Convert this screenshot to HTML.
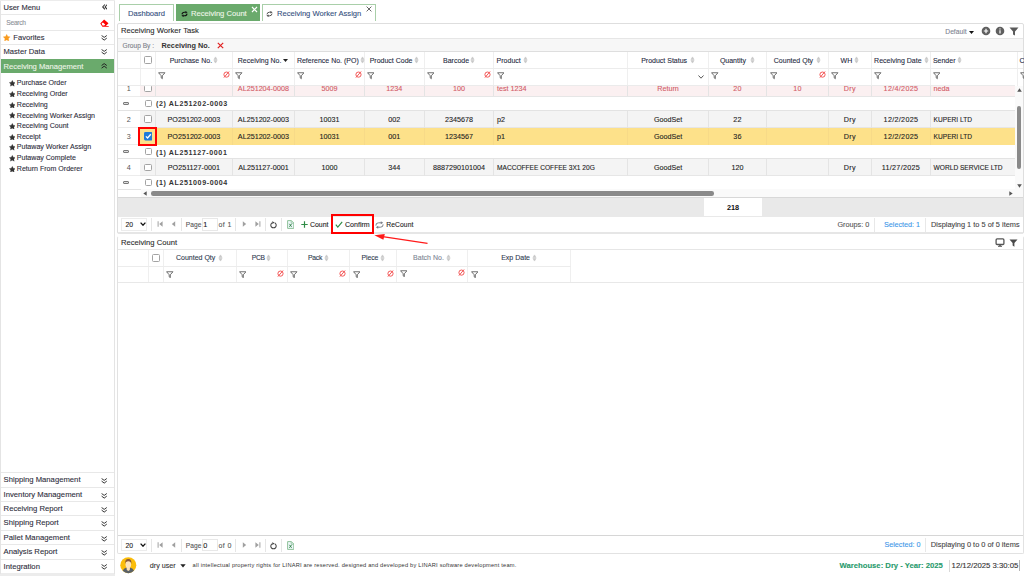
<!DOCTYPE html>
<html><head><meta charset="utf-8">
<style>
*{box-sizing:border-box;margin:0;padding:0}
html,body{width:1024px;height:576px;overflow:hidden;background:#fff;font-family:"Liberation Sans",sans-serif;color:#333;font-size:7.4px}
.a{position:absolute}
.t,.dt,.ht{-webkit-text-stroke:0.1px currentColor}
.t{position:absolute;white-space:nowrap;line-height:10px}
.srow{position:absolute;left:0;width:113px;border-bottom:1px solid #e6e6e6}
.hl{position:absolute;height:1px;background:#e2e2e2}
.vl{position:absolute;width:1px;background:#e8e8e8}
.cb{position:absolute;width:7.5px;height:7.5px;border:1px solid #a3a3a3;border-radius:1.5px;background:#fff}
.ht{position:absolute;white-space:nowrap;line-height:10px;font-size:7px;color:#1f2b3f}
.dt{position:absolute;white-space:nowrap;line-height:10px;font-size:7.2px;color:#222}
.pk{color:#d25a66}
</style></head><body>
<div class="a" style="left:0.00px;top:0.00px;width:115.00px;height:576.00px;background:#fff"></div>
<div class="a" style="left:0.00px;top:573.40px;width:115.00px;height:2.60px;background:#ececec"></div>
<div class="a" style="left:0.00px;top:0.00px;width:1.00px;height:574.00px;background:#e4e4e4"></div>
<div class="a" style="left:114.00px;top:0.00px;width:1.00px;height:574.00px;background:#e4e4e4"></div>
<div class="a" style="left:0.00px;top:0.00px;width:115.00px;height:1.00px;background:#ececec"></div>
<span class="t" style="left:3.50px;top:3.40px;font-size:7.5px;color:#2d2d3a">User Menu</span>
<svg class="a" style="left:101.5px;top:4.4px" width="5.8" height="5.8" viewBox="0 0 5.8 5.8"><path d="M2.9 0.5 L0.7 2.9 L2.9 5.3 M5.3 0.5 L3.1 2.9 L5.3 5.3" fill="none" stroke="#333" stroke-width="1.05"/></svg>
<div class="a" style="left:1.00px;top:14.00px;width:113.00px;height:1.00px;background:#e8e8e8"></div>
<span class="t" style="left:6.30px;top:17.70px;font-size:6.7px;letter-spacing:-0.3px;color:#8d9199">Search</span>
<svg class="a" style="left:99.5px;top:19.3px" width="9" height="8" viewBox="0 0 9 8"><path d="M0.3 4.4 L4.1 0.6 L8.5 4.2 L5.9 7 L8.7 7 L8.7 7.8 L2.4 7.8 Z" fill="#ff0000"/><path d="M1.6 4.6 L2.9 3.4 L5.2 5.4 L4.2 6.4 L2.5 6.4 Z" fill="#fff"/></svg>
<div class="a" style="left:1.00px;top:30.00px;width:113.00px;height:1.00px;background:#e8e8e8"></div>
<svg class="a" style="left:3.2px;top:33.6px" width="7.4" height="7.4" viewBox="0 0 10 10"><path d="M5.00 0.40 L6.53 3.30 L9.76 3.85 L7.47 6.20 L7.94 9.45 L5.00 8.00 L2.06 9.45 L2.53 6.20 L0.24 3.85 L3.47 3.30 Z" fill="#f99a1c" stroke="#f99a1c" stroke-width="0.3" stroke-linejoin="round"/></svg>
<span class="t" style="left:13.30px;top:32.50px;font-size:7.6px;color:#2d2d3a">Favorites</span>
<svg class="a" style="left:101.00px;top:34.60px" width="6.4" height="6" viewBox="0 0 6.4 6"><path d="M0.6 0.5 L3.2 2.4 L5.8 0.5 M0.6 3.1 L3.2 5.1 L5.8 3.1" fill="none" stroke="#333" stroke-width="1"/></svg>
<div class="a" style="left:1.00px;top:44.00px;width:113.00px;height:1.00px;background:#e8e8e8"></div>
<span class="t" style="left:3.50px;top:47.10px;font-size:7.6px;color:#2d2d3a">Master Data</span>
<svg class="a" style="left:101.00px;top:48.80px" width="6.4" height="6" viewBox="0 0 6.4 6"><path d="M0.6 0.5 L3.2 2.4 L5.8 0.5 M0.6 3.1 L3.2 5.1 L5.8 3.1" fill="none" stroke="#333" stroke-width="1"/></svg>
<div class="a" style="left:1.00px;top:59.00px;width:112.80px;height:13.80px;background:#6aaa6c"></div>
<span class="t" style="left:3.50px;top:61.70px;font-size:7.6px;color:#eef5e8">Receiving Management</span>
<svg class="a" style="left:101.00px;top:62.90px" width="6.4" height="6" viewBox="0 0 6.4 6"><path d="M0.6 2.5 L3.2 0.6 L5.8 2.5 M0.6 5.1 L3.2 3.2 L5.8 5.1" fill="none" stroke="#222" stroke-width="1"/></svg>
<svg class="a" style="left:8.9px;top:80.10px" width="6.6" height="6.6" viewBox="0 0 10 10"><path d="M5.00 0.40 L6.53 3.30 L9.76 3.85 L7.47 6.20 L7.94 9.45 L5.00 8.00 L2.06 9.45 L2.53 6.20 L0.24 3.85 L3.47 3.30 Z" fill="#333" stroke="#333" stroke-width="0.3" stroke-linejoin="round"/></svg>
<span class="t" style="left:16.80px;top:78.30px;font-size:7.05px;color:#2d2d3a">Purchase Order</span>
<svg class="a" style="left:8.9px;top:90.90px" width="6.6" height="6.6" viewBox="0 0 10 10"><path d="M5.00 0.40 L6.53 3.30 L9.76 3.85 L7.47 6.20 L7.94 9.45 L5.00 8.00 L2.06 9.45 L2.53 6.20 L0.24 3.85 L3.47 3.30 Z" fill="#333" stroke="#333" stroke-width="0.3" stroke-linejoin="round"/></svg>
<span class="t" style="left:16.80px;top:89.10px;font-size:7.05px;color:#2d2d3a">Receiving Order</span>
<svg class="a" style="left:8.9px;top:101.70px" width="6.6" height="6.6" viewBox="0 0 10 10"><path d="M5.00 0.40 L6.53 3.30 L9.76 3.85 L7.47 6.20 L7.94 9.45 L5.00 8.00 L2.06 9.45 L2.53 6.20 L0.24 3.85 L3.47 3.30 Z" fill="#333" stroke="#333" stroke-width="0.3" stroke-linejoin="round"/></svg>
<span class="t" style="left:16.80px;top:99.90px;font-size:7.05px;color:#2d2d3a">Receiving</span>
<svg class="a" style="left:8.9px;top:112.40px" width="6.6" height="6.6" viewBox="0 0 10 10"><path d="M5.00 0.40 L6.53 3.30 L9.76 3.85 L7.47 6.20 L7.94 9.45 L5.00 8.00 L2.06 9.45 L2.53 6.20 L0.24 3.85 L3.47 3.30 Z" fill="#333" stroke="#333" stroke-width="0.3" stroke-linejoin="round"/></svg>
<span class="t" style="left:16.80px;top:110.60px;font-size:7.05px;color:#2d2d3a">Receiving Worker Assign</span>
<svg class="a" style="left:8.9px;top:122.80px" width="6.6" height="6.6" viewBox="0 0 10 10"><path d="M5.00 0.40 L6.53 3.30 L9.76 3.85 L7.47 6.20 L7.94 9.45 L5.00 8.00 L2.06 9.45 L2.53 6.20 L0.24 3.85 L3.47 3.30 Z" fill="#333" stroke="#333" stroke-width="0.3" stroke-linejoin="round"/></svg>
<span class="t" style="left:16.80px;top:121.00px;font-size:7.05px;color:#2d2d3a">Receiving Count</span>
<svg class="a" style="left:8.9px;top:133.60px" width="6.6" height="6.6" viewBox="0 0 10 10"><path d="M5.00 0.40 L6.53 3.30 L9.76 3.85 L7.47 6.20 L7.94 9.45 L5.00 8.00 L2.06 9.45 L2.53 6.20 L0.24 3.85 L3.47 3.30 Z" fill="#333" stroke="#333" stroke-width="0.3" stroke-linejoin="round"/></svg>
<span class="t" style="left:16.80px;top:131.80px;font-size:7.05px;color:#2d2d3a">Receipt</span>
<svg class="a" style="left:8.9px;top:144.20px" width="6.6" height="6.6" viewBox="0 0 10 10"><path d="M5.00 0.40 L6.53 3.30 L9.76 3.85 L7.47 6.20 L7.94 9.45 L5.00 8.00 L2.06 9.45 L2.53 6.20 L0.24 3.85 L3.47 3.30 Z" fill="#333" stroke="#333" stroke-width="0.3" stroke-linejoin="round"/></svg>
<span class="t" style="left:16.80px;top:142.40px;font-size:7.05px;color:#2d2d3a">Putaway Worker Assign</span>
<svg class="a" style="left:8.9px;top:155.10px" width="6.6" height="6.6" viewBox="0 0 10 10"><path d="M5.00 0.40 L6.53 3.30 L9.76 3.85 L7.47 6.20 L7.94 9.45 L5.00 8.00 L2.06 9.45 L2.53 6.20 L0.24 3.85 L3.47 3.30 Z" fill="#333" stroke="#333" stroke-width="0.3" stroke-linejoin="round"/></svg>
<span class="t" style="left:16.80px;top:153.30px;font-size:7.05px;color:#2d2d3a">Putaway Complete</span>
<svg class="a" style="left:8.9px;top:165.50px" width="6.6" height="6.6" viewBox="0 0 10 10"><path d="M5.00 0.40 L6.53 3.30 L9.76 3.85 L7.47 6.20 L7.94 9.45 L5.00 8.00 L2.06 9.45 L2.53 6.20 L0.24 3.85 L3.47 3.30 Z" fill="#333" stroke="#333" stroke-width="0.3" stroke-linejoin="round"/></svg>
<span class="t" style="left:16.80px;top:163.70px;font-size:7.05px;color:#2d2d3a">Return From Orderer</span>
<div class="a" style="left:1.00px;top:472.00px;width:113.00px;height:1.00px;background:#e8e8e8"></div>
<span class="t" style="left:3.60px;top:475.00px;font-size:7.7px;color:#2d2d3a">Shipping Management</span>
<svg class="a" style="left:100.90px;top:477.50px" width="6.4" height="6" viewBox="0 0 6.4 6"><path d="M0.6 0.5 L3.2 2.4 L5.8 0.5 M0.6 3.1 L3.2 5.1 L5.8 3.1" fill="none" stroke="#333" stroke-width="1"/></svg>
<div class="a" style="left:1.00px;top:487.00px;width:113.00px;height:1.00px;background:#e8e8e8"></div>
<span class="t" style="left:3.60px;top:490.00px;font-size:7.7px;color:#2d2d3a">Inventory Management</span>
<svg class="a" style="left:100.90px;top:492.50px" width="6.4" height="6" viewBox="0 0 6.4 6"><path d="M0.6 0.5 L3.2 2.4 L5.8 0.5 M0.6 3.1 L3.2 5.1 L5.8 3.1" fill="none" stroke="#333" stroke-width="1"/></svg>
<div class="a" style="left:1.00px;top:501.20px;width:113.00px;height:1.00px;background:#e8e8e8"></div>
<span class="t" style="left:3.60px;top:504.20px;font-size:7.7px;color:#2d2d3a">Receiving Report</span>
<svg class="a" style="left:100.90px;top:506.70px" width="6.4" height="6" viewBox="0 0 6.4 6"><path d="M0.6 0.5 L3.2 2.4 L5.8 0.5 M0.6 3.1 L3.2 5.1 L5.8 3.1" fill="none" stroke="#333" stroke-width="1"/></svg>
<div class="a" style="left:1.00px;top:515.30px;width:113.00px;height:1.00px;background:#e8e8e8"></div>
<span class="t" style="left:3.60px;top:518.30px;font-size:7.7px;color:#2d2d3a">Shipping Report</span>
<svg class="a" style="left:100.90px;top:520.80px" width="6.4" height="6" viewBox="0 0 6.4 6"><path d="M0.6 0.5 L3.2 2.4 L5.8 0.5 M0.6 3.1 L3.2 5.1 L5.8 3.1" fill="none" stroke="#333" stroke-width="1"/></svg>
<div class="a" style="left:1.00px;top:530.00px;width:113.00px;height:1.00px;background:#e8e8e8"></div>
<span class="t" style="left:3.60px;top:533.00px;font-size:7.7px;color:#2d2d3a">Pallet Management</span>
<svg class="a" style="left:100.90px;top:535.50px" width="6.4" height="6" viewBox="0 0 6.4 6"><path d="M0.6 0.5 L3.2 2.4 L5.8 0.5 M0.6 3.1 L3.2 5.1 L5.8 3.1" fill="none" stroke="#333" stroke-width="1"/></svg>
<div class="a" style="left:1.00px;top:544.10px;width:113.00px;height:1.00px;background:#e8e8e8"></div>
<span class="t" style="left:3.60px;top:547.10px;font-size:7.7px;color:#2d2d3a">Analysis Report</span>
<svg class="a" style="left:100.90px;top:549.60px" width="6.4" height="6" viewBox="0 0 6.4 6"><path d="M0.6 0.5 L3.2 2.4 L5.8 0.5 M0.6 3.1 L3.2 5.1 L5.8 3.1" fill="none" stroke="#333" stroke-width="1"/></svg>
<div class="a" style="left:1.00px;top:558.80px;width:113.00px;height:1.00px;background:#e8e8e8"></div>
<span class="t" style="left:3.60px;top:561.80px;font-size:7.7px;color:#2d2d3a">Integration</span>
<svg class="a" style="left:100.90px;top:564.30px" width="6.4" height="6" viewBox="0 0 6.4 6"><path d="M0.6 0.5 L3.2 2.4 L5.8 0.5 M0.6 3.1 L3.2 5.1 L5.8 3.1" fill="none" stroke="#333" stroke-width="1"/></svg>
<div class="a" style="left:119.00px;top:4.00px;width:55.00px;height:17.00px;border:1px solid #a9cfa9;border-bottom:none;background:#fff"></div>
<span class="t" style="left:-3.50px;top:8.70px;width:300px;text-align:center;font-size:7.6px;color:#34507e">Dashboard</span>
<div class="a" style="left:176.00px;top:4.00px;width:84.00px;height:17.00px;background:#6aaa6c"></div>
<svg class="a" style="left:180.6px;top:10.6px" width="7" height="6" viewBox="0 0 7 6"><path d="M1 3.4 Q1.2 1.2 3.4 1.2 L4.8 1.2 M6 2.6 Q5.8 4.8 3.6 4.8 L2.2 4.8" fill="none" stroke="#111" stroke-width="1.1"/><path d="M4.4 0 L6.6 1.2 L4.4 2.5 Z M2.6 3.5 L0.4 4.8 L2.6 6 Z" fill="#111"/></svg>
<span class="t" style="left:191.00px;top:8.70px;font-size:7.6px;color:#f0f7ea">Receiving Count</span>
<svg class="a" style="left:250.5px;top:5.5px" width="7" height="7" viewBox="0 0 7 7"><path d="M1 1 L6 6 M6 1 L1 6" stroke="#fff" stroke-width="1.2"/></svg>
<div class="a" style="left:262.00px;top:4.00px;width:114.00px;height:17.00px;border:1px solid #a9cfa9;border-bottom:none;background:#fff"></div>
<svg class="a" style="left:266.4px;top:10.6px" width="7" height="6" viewBox="0 0 7 6"><path d="M1 3.4 Q1.2 1.2 3.4 1.2 L4.8 1.2 M6 2.6 Q5.8 4.8 3.6 4.8 L2.2 4.8" fill="none" stroke="#444" stroke-width="0.9"/><path d="M4.4 0 L6.6 1.2 L4.4 2.5 Z M2.6 3.5 L0.4 4.8 L2.6 6 Z" fill="#444"/></svg>
<span class="t" style="left:277.00px;top:8.70px;font-size:7.6px;color:#34507e">Receiving Worker Assign</span>
<svg class="a" style="left:366px;top:5.5px" width="6" height="6" viewBox="0 0 6 6"><path d="M0.6 0.6 L5.4 5.4 M5.4 0.6 L0.6 5.4" stroke="#555" stroke-width="0.9"/></svg>
<div class="a" style="left:117.00px;top:23.00px;width:907.00px;height:211.00px;border:1px solid #dedede;border-radius:2px;background:#fff"></div>
<span class="t" style="left:121.00px;top:26.40px;font-size:7.65px;color:#2b2b2b">Receiving Worker Task</span>
<span class="t" style="left:666.50px;top:27.00px;width:300px;text-align:right;font-size:6.7px;color:#7d8391">Default</span>
<svg class="a" style="left:969.2px;top:30.8px" width="5" height="3" viewBox="0 0 5 3"><path d="M0 0 L5 0 L2.5 3 Z" fill="#111"/></svg>
<svg class="a" style="left:981px;top:26px" width="10" height="10" viewBox="0 0 10 10"><circle cx="5" cy="5" r="4.3" fill="#5f5f5f"/><path d="M5 2.8 L5 7.2 M2.8 5 L7.2 5" stroke="#fff" stroke-width="1.2"/></svg>
<svg class="a" style="left:994.5px;top:26px" width="10" height="10" viewBox="0 0 10 10"><circle cx="5" cy="5" r="4.3" fill="#5f5f5f"/><path d="M5 4.3 L5 7.4" stroke="#fff" stroke-width="1.2"/><circle cx="5" cy="2.9" r="0.7" fill="#fff"/></svg>
<svg class="a" style="left:1008.5px;top:26.5px" width="10" height="9" viewBox="0 0 10 9"><path d="M0.5 0.6 L9.5 0.6 L6 4.4 L6 8.6 L4 7.4 L4 4.4 Z" fill="#5a5a5a"/></svg>
<div class="a" style="left:118.00px;top:38.00px;width:905.00px;height:1.00px;background:#e6e6e6"></div>
<div class="a" style="left:118.00px;top:39.00px;width:905.00px;height:12.50px;background:#f7f7f7"></div>
<span class="t" style="left:122.50px;top:41.00px;font-size:6.6px;color:#7b7f88">Group By :</span>
<span class="t" style="left:161.50px;top:40.90px;font-size:7.3px;font-weight:bold;color:#333;-webkit-text-stroke:0">Receiving No.</span>
<svg class="a" style="left:216.5px;top:41.5px" width="7" height="7" viewBox="0 0 7 7"><path d="M0.8 0.8 L6.2 6.2 M6.2 0.8 L0.8 6.2" stroke="#e02020" stroke-width="1.2"/></svg>
<div class="a" style="left:118.00px;top:51.00px;width:905.00px;height:1.20px;background:#dedede"></div>
<div class="a" style="left:140.00px;top:52.00px;width:1.00px;height:33.50px;background:#efefef"></div>
<div class="a" style="left:155.00px;top:52.00px;width:1.00px;height:33.50px;background:#efefef"></div>
<div class="a" style="left:232.00px;top:52.00px;width:1.00px;height:33.50px;background:#efefef"></div>
<div class="a" style="left:294.00px;top:52.00px;width:1.00px;height:33.50px;background:#efefef"></div>
<div class="a" style="left:364.00px;top:52.00px;width:1.00px;height:33.50px;background:#efefef"></div>
<div class="a" style="left:424.00px;top:52.00px;width:1.00px;height:33.50px;background:#efefef"></div>
<div class="a" style="left:493.00px;top:52.00px;width:1.00px;height:33.50px;background:#efefef"></div>
<div class="a" style="left:627.00px;top:52.00px;width:1.00px;height:33.50px;background:#efefef"></div>
<div class="a" style="left:708.00px;top:52.00px;width:1.00px;height:33.50px;background:#efefef"></div>
<div class="a" style="left:766.00px;top:52.00px;width:1.00px;height:33.50px;background:#efefef"></div>
<div class="a" style="left:828.00px;top:52.00px;width:1.00px;height:33.50px;background:#efefef"></div>
<div class="a" style="left:871.00px;top:52.00px;width:1.00px;height:33.50px;background:#efefef"></div>
<div class="a" style="left:930.00px;top:52.00px;width:1.00px;height:33.50px;background:#efefef"></div>
<div class="a" style="left:1017.00px;top:52.00px;width:1.00px;height:33.50px;background:#efefef"></div>
<div class="a" style="left:118.00px;top:68.30px;width:905.00px;height:1.00px;background:#ececec"></div>
<div class="a" style="left:118.00px;top:85.00px;width:897.00px;height:1.00px;background:#ebebeb"></div>
<div class="cb" style="left:144.20px;top:56.30px;width:7.5px;height:7.5px"></div>
<span class="ht" style="left:169.70px;top:56.10px;">Purchase No.</span>
<svg class="a" style="left:213.10px;top:56.00px" width="5" height="8" viewBox="0 0 5 8"><path d="M2.5 0.9 L4.1 3.4 L0.9 3.4 Z M2.5 7.1 L4.1 4.6 L0.9 4.6 Z" fill="#c8c8c8" stroke="#c8c8c8" stroke-width="0.6" stroke-linejoin="round"/></svg>
<span class="ht" style="left:237.80px;top:56.10px;">Receiving No.</span>
<svg class="a" style="left:282.80px;top:59px" width="5" height="3" viewBox="0 0 5 3"><path d="M0 0 L5 0 L2.5 3 Z" fill="#222"/></svg>
<span class="ht" style="left:296.90px;top:56.10px;">Reference No. (PO)</span>
<svg class="a" style="left:360.00px;top:56.00px" width="5" height="8" viewBox="0 0 5 8"><path d="M2.5 0.9 L4.1 3.4 L0.9 3.4 Z M2.5 7.1 L4.1 4.6 L0.9 4.6 Z" fill="#c8c8c8" stroke="#c8c8c8" stroke-width="0.6" stroke-linejoin="round"/></svg>
<span class="ht" style="left:369.70px;top:56.10px;">Product Code</span>
<svg class="a" style="left:414.10px;top:56.00px" width="5" height="8" viewBox="0 0 5 8"><path d="M2.5 0.9 L4.1 3.4 L0.9 3.4 Z M2.5 7.1 L4.1 4.6 L0.9 4.6 Z" fill="#c8c8c8" stroke="#c8c8c8" stroke-width="0.6" stroke-linejoin="round"/></svg>
<span class="ht" style="left:443.00px;top:56.10px;">Barcode</span>
<svg class="a" style="left:470.20px;top:56.00px" width="5" height="8" viewBox="0 0 5 8"><path d="M2.5 0.9 L4.1 3.4 L0.9 3.4 Z M2.5 7.1 L4.1 4.6 L0.9 4.6 Z" fill="#c8c8c8" stroke="#c8c8c8" stroke-width="0.6" stroke-linejoin="round"/></svg>
<span class="ht" style="left:496.60px;top:56.10px;">Product</span>
<svg class="a" style="left:522.50px;top:56.00px" width="5" height="8" viewBox="0 0 5 8"><path d="M2.5 0.9 L4.1 3.4 L0.9 3.4 Z M2.5 7.1 L4.1 4.6 L0.9 4.6 Z" fill="#c8c8c8" stroke="#c8c8c8" stroke-width="0.6" stroke-linejoin="round"/></svg>
<span class="ht" style="left:641.20px;top:56.10px;">Product Status</span>
<svg class="a" style="left:690.20px;top:56.00px" width="5" height="8" viewBox="0 0 5 8"><path d="M2.5 0.9 L4.1 3.4 L0.9 3.4 Z M2.5 7.1 L4.1 4.6 L0.9 4.6 Z" fill="#c8c8c8" stroke="#c8c8c8" stroke-width="0.6" stroke-linejoin="round"/></svg>
<span class="ht" style="left:719.90px;top:56.10px;">Quantity</span>
<svg class="a" style="left:749.50px;top:56.00px" width="5" height="8" viewBox="0 0 5 8"><path d="M2.5 0.9 L4.1 3.4 L0.9 3.4 Z M2.5 7.1 L4.1 4.6 L0.9 4.6 Z" fill="#c8c8c8" stroke="#c8c8c8" stroke-width="0.6" stroke-linejoin="round"/></svg>
<span class="ht" style="left:773.80px;top:56.10px;">Counted Qty</span>
<svg class="a" style="left:816.30px;top:56.00px" width="5" height="8" viewBox="0 0 5 8"><path d="M2.5 0.9 L4.1 3.4 L0.9 3.4 Z M2.5 7.1 L4.1 4.6 L0.9 4.6 Z" fill="#c8c8c8" stroke="#c8c8c8" stroke-width="0.6" stroke-linejoin="round"/></svg>
<span class="ht" style="left:840.60px;top:56.10px;">WH</span>
<svg class="a" style="left:854.00px;top:56.00px" width="5" height="8" viewBox="0 0 5 8"><path d="M2.5 0.9 L4.1 3.4 L0.9 3.4 Z M2.5 7.1 L4.1 4.6 L0.9 4.6 Z" fill="#c8c8c8" stroke="#c8c8c8" stroke-width="0.6" stroke-linejoin="round"/></svg>
<span class="ht" style="left:874.10px;top:56.10px;">Receiving Date</span>
<svg class="a" style="left:924.10px;top:56.00px" width="5" height="8" viewBox="0 0 5 8"><path d="M2.5 0.9 L4.1 3.4 L0.9 3.4 Z M2.5 7.1 L4.1 4.6 L0.9 4.6 Z" fill="#c8c8c8" stroke="#c8c8c8" stroke-width="0.6" stroke-linejoin="round"/></svg>
<span class="ht" style="left:932.90px;top:56.10px;">Sender</span>
<svg class="a" style="left:957.30px;top:56.00px" width="5" height="8" viewBox="0 0 5 8"><path d="M2.5 0.9 L4.1 3.4 L0.9 3.4 Z M2.5 7.1 L4.1 4.6 L0.9 4.6 Z" fill="#c8c8c8" stroke="#c8c8c8" stroke-width="0.6" stroke-linejoin="round"/></svg>
<span class="ht" style="left:1019.50px;top:56.10px;">C</span>
<svg class="a" style="left:158.30px;top:72.00px" width="7.5" height="7.5" viewBox="0 0 8 8"><path d="M0.6 0.8 L7.4 0.8 L4.6 4 L4.6 7.2 L3.4 6.2 L3.4 4 Z" fill="none" stroke="#555" stroke-width="0.9" stroke-linejoin="round"/></svg>
<svg class="a" style="left:235.00px;top:72.00px" width="7.5" height="7.5" viewBox="0 0 8 8"><path d="M0.6 0.8 L7.4 0.8 L4.6 4 L4.6 7.2 L3.4 6.2 L3.4 4 Z" fill="none" stroke="#555" stroke-width="0.9" stroke-linejoin="round"/></svg>
<svg class="a" style="left:296.60px;top:72.00px" width="7.5" height="7.5" viewBox="0 0 8 8"><path d="M0.6 0.8 L7.4 0.8 L4.6 4 L4.6 7.2 L3.4 6.2 L3.4 4 Z" fill="none" stroke="#555" stroke-width="0.9" stroke-linejoin="round"/></svg>
<svg class="a" style="left:366.70px;top:72.00px" width="7.5" height="7.5" viewBox="0 0 8 8"><path d="M0.6 0.8 L7.4 0.8 L4.6 4 L4.6 7.2 L3.4 6.2 L3.4 4 Z" fill="none" stroke="#555" stroke-width="0.9" stroke-linejoin="round"/></svg>
<svg class="a" style="left:426.70px;top:72.00px" width="7.5" height="7.5" viewBox="0 0 8 8"><path d="M0.6 0.8 L7.4 0.8 L4.6 4 L4.6 7.2 L3.4 6.2 L3.4 4 Z" fill="none" stroke="#555" stroke-width="0.9" stroke-linejoin="round"/></svg>
<svg class="a" style="left:496.70px;top:72.00px" width="7.5" height="7.5" viewBox="0 0 8 8"><path d="M0.6 0.8 L7.4 0.8 L4.6 4 L4.6 7.2 L3.4 6.2 L3.4 4 Z" fill="none" stroke="#555" stroke-width="0.9" stroke-linejoin="round"/></svg>
<svg class="a" style="left:711.00px;top:72.00px" width="7.5" height="7.5" viewBox="0 0 8 8"><path d="M0.6 0.8 L7.4 0.8 L4.6 4 L4.6 7.2 L3.4 6.2 L3.4 4 Z" fill="none" stroke="#555" stroke-width="0.9" stroke-linejoin="round"/></svg>
<svg class="a" style="left:769.50px;top:72.00px" width="7.5" height="7.5" viewBox="0 0 8 8"><path d="M0.6 0.8 L7.4 0.8 L4.6 4 L4.6 7.2 L3.4 6.2 L3.4 4 Z" fill="none" stroke="#555" stroke-width="0.9" stroke-linejoin="round"/></svg>
<svg class="a" style="left:831.30px;top:72.00px" width="7.5" height="7.5" viewBox="0 0 8 8"><path d="M0.6 0.8 L7.4 0.8 L4.6 4 L4.6 7.2 L3.4 6.2 L3.4 4 Z" fill="none" stroke="#555" stroke-width="0.9" stroke-linejoin="round"/></svg>
<svg class="a" style="left:874.10px;top:72.00px" width="7.5" height="7.5" viewBox="0 0 8 8"><path d="M0.6 0.8 L7.4 0.8 L4.6 4 L4.6 7.2 L3.4 6.2 L3.4 4 Z" fill="none" stroke="#555" stroke-width="0.9" stroke-linejoin="round"/></svg>
<svg class="a" style="left:932.90px;top:72.00px" width="7.5" height="7.5" viewBox="0 0 8 8"><path d="M0.6 0.8 L7.4 0.8 L4.6 4 L4.6 7.2 L3.4 6.2 L3.4 4 Z" fill="none" stroke="#555" stroke-width="0.9" stroke-linejoin="round"/></svg>
<svg class="a" style="left:1020.00px;top:72.00px" width="7.5" height="7.5" viewBox="0 0 8 8"><path d="M0.6 0.8 L7.4 0.8 L4.6 4 L4.6 7.2 L3.4 6.2 L3.4 4 Z" fill="none" stroke="#555" stroke-width="0.9" stroke-linejoin="round"/></svg>
<svg class="a" style="left:222.70px;top:71.20px" width="7" height="7" viewBox="0 0 7 7"><circle cx="3.5" cy="3.6" r="2.6" fill="none" stroke="#f25050" stroke-width="0.95"/><path d="M0.9 6.6 L6.1 0.5" stroke="#f25050" stroke-width="0.95"/></svg>
<svg class="a" style="left:355.20px;top:71.20px" width="7" height="7" viewBox="0 0 7 7"><circle cx="3.5" cy="3.6" r="2.6" fill="none" stroke="#f25050" stroke-width="0.95"/><path d="M0.9 6.6 L6.1 0.5" stroke="#f25050" stroke-width="0.95"/></svg>
<svg class="a" style="left:484.20px;top:71.20px" width="7" height="7" viewBox="0 0 7 7"><circle cx="3.5" cy="3.6" r="2.6" fill="none" stroke="#f25050" stroke-width="0.95"/><path d="M0.9 6.6 L6.1 0.5" stroke="#f25050" stroke-width="0.95"/></svg>
<svg class="a" style="left:818.70px;top:71.20px" width="7" height="7" viewBox="0 0 7 7"><circle cx="3.5" cy="3.6" r="2.6" fill="none" stroke="#f25050" stroke-width="0.95"/><path d="M0.9 6.6 L6.1 0.5" stroke="#f25050" stroke-width="0.95"/></svg>
<svg class="a" style="left:697.5px;top:74.5px" width="6" height="4" viewBox="0 0 6 4"><path d="M0.5 0.5 L3 3.2 L5.5 0.5" fill="none" stroke="#444" stroke-width="0.9"/></svg>
<div class="a" style="left:118px;top:86px;width:897px;height:103.5px;overflow:hidden">
<div class="a" style="left:-118px;top:-86px;width:1024px;height:576px"><div class="a" style="left:140.00px;top:79.40px;width:875.00px;height:17.00px;background:#fbf0f1"></div>
<div class="a" style="left:140.00px;top:95.90px;width:875.00px;height:1.00px;background:#e6e6e6"></div>
<div class="a" style="left:118.00px;top:95.90px;width:22.00px;height:1.00px;background:#ececec"></div>
<div class="a" style="left:155.00px;top:79.40px;width:1.00px;height:17.00px;background:#e4e4e4"></div>
<div class="a" style="left:232.00px;top:79.40px;width:1.00px;height:17.00px;background:#e4e4e4"></div>
<div class="a" style="left:294.00px;top:79.40px;width:1.00px;height:17.00px;background:#e4e4e4"></div>
<div class="a" style="left:364.00px;top:79.40px;width:1.00px;height:17.00px;background:#e4e4e4"></div>
<div class="a" style="left:424.00px;top:79.40px;width:1.00px;height:17.00px;background:#e4e4e4"></div>
<div class="a" style="left:493.00px;top:79.40px;width:1.00px;height:17.00px;background:#e4e4e4"></div>
<div class="a" style="left:627.00px;top:79.40px;width:1.00px;height:17.00px;background:#e4e4e4"></div>
<div class="a" style="left:708.00px;top:79.40px;width:1.00px;height:17.00px;background:#e4e4e4"></div>
<div class="a" style="left:766.00px;top:79.40px;width:1.00px;height:17.00px;background:#e4e4e4"></div>
<div class="a" style="left:828.00px;top:79.40px;width:1.00px;height:17.00px;background:#e4e4e4"></div>
<div class="a" style="left:871.00px;top:79.40px;width:1.00px;height:17.00px;background:#e4e4e4"></div>
<div class="a" style="left:930.00px;top:79.40px;width:1.00px;height:17.00px;background:#e4e4e4"></div>
<div class="a" style="left:1017.00px;top:79.40px;width:1.00px;height:17.00px;background:#e4e4e4"></div>
<span class="dt pk" style="left:113.45px;top:83.50px;width:300px;text-align:center;">AL251204-0008</span>
<span class="dt pk" style="left:179.50px;top:83.50px;width:300px;text-align:center;">5009</span>
<span class="dt pk" style="left:244.30px;top:83.50px;width:300px;text-align:center;">1234</span>
<span class="dt pk" style="left:309.00px;top:83.50px;width:300px;text-align:center;">100</span>
<span class="dt pk" style="left:497.00px;top:83.50px;">test 1234</span>
<span class="dt pk" style="left:518.10px;top:83.50px;width:300px;text-align:center;">Return</span>
<span class="dt pk" style="left:587.60px;top:83.50px;width:300px;text-align:center;letter-spacing:0.4px;">20</span>
<span class="dt pk" style="left:647.60px;top:83.50px;width:300px;text-align:center;letter-spacing:0.4px;">10</span>
<span class="dt pk" style="left:699.95px;top:83.50px;width:300px;text-align:center;letter-spacing:0.4px;">Dry</span>
<span class="dt pk" style="left:750.95px;top:83.50px;width:300px;text-align:center;letter-spacing:0.3px;">12/4/2025</span>
<span class="dt pk" style="left:933.60px;top:83.50px;">neda</span>
<span class="dt" style="left:-21.20px;top:83.90px;width:300px;text-align:center;color:#555;-webkit-text-stroke:0">1</span>
<div class="cb" style="left:144.20px;top:84.50px;width:7.5px;height:7.5px"></div>
<div class="a" style="left:118.00px;top:110.00px;width:897.00px;height:1.00px;background:#e3e3e3"></div>
<div class="a" style="left:123.40px;top:102.05px;width:5.6px;height:2.8px;border:1px solid #7a7a7a;border-radius:1px;background:#ddd"></div>
<div class="cb" style="left:145.10px;top:99.95px;width:7px;height:7px"></div>
<span class="dt" style="left:156.00px;top:99.25px;font-weight:bold;font-size:7.1px;letter-spacing:0.6px;color:#333;-webkit-text-stroke:0">(2) AL251202-0003</span>
<div class="a" style="left:140.00px;top:110.50px;width:875.00px;height:17.10px;background:#f4f4f4"></div>
<div class="a" style="left:140.00px;top:127.10px;width:875.00px;height:1.00px;background:#e6e6e6"></div>
<div class="a" style="left:118.00px;top:127.10px;width:22.00px;height:1.00px;background:#ececec"></div>
<div class="a" style="left:155.00px;top:110.50px;width:1.00px;height:17.10px;background:#e4e4e4"></div>
<div class="a" style="left:232.00px;top:110.50px;width:1.00px;height:17.10px;background:#e4e4e4"></div>
<div class="a" style="left:294.00px;top:110.50px;width:1.00px;height:17.10px;background:#e4e4e4"></div>
<div class="a" style="left:364.00px;top:110.50px;width:1.00px;height:17.10px;background:#e4e4e4"></div>
<div class="a" style="left:424.00px;top:110.50px;width:1.00px;height:17.10px;background:#e4e4e4"></div>
<div class="a" style="left:493.00px;top:110.50px;width:1.00px;height:17.10px;background:#e4e4e4"></div>
<div class="a" style="left:627.00px;top:110.50px;width:1.00px;height:17.10px;background:#e4e4e4"></div>
<div class="a" style="left:708.00px;top:110.50px;width:1.00px;height:17.10px;background:#e4e4e4"></div>
<div class="a" style="left:766.00px;top:110.50px;width:1.00px;height:17.10px;background:#e4e4e4"></div>
<div class="a" style="left:828.00px;top:110.50px;width:1.00px;height:17.10px;background:#e4e4e4"></div>
<div class="a" style="left:871.00px;top:110.50px;width:1.00px;height:17.10px;background:#e4e4e4"></div>
<div class="a" style="left:930.00px;top:110.50px;width:1.00px;height:17.10px;background:#e4e4e4"></div>
<div class="a" style="left:1017.00px;top:110.50px;width:1.00px;height:17.10px;background:#e4e4e4"></div>
<span class="dt" style="left:43.90px;top:114.65px;width:300px;text-align:center;">PO251202-0003</span>
<span class="dt" style="left:113.45px;top:114.65px;width:300px;text-align:center;">AL251202-0003</span>
<span class="dt" style="left:179.50px;top:114.65px;width:300px;text-align:center;">10031</span>
<span class="dt" style="left:244.30px;top:114.65px;width:300px;text-align:center;">002</span>
<span class="dt" style="left:309.00px;top:114.65px;width:300px;text-align:center;">2345678</span>
<span class="dt" style="left:497.00px;top:114.65px;">p2</span>
<span class="dt" style="left:518.10px;top:114.65px;width:300px;text-align:center;">GoodSet</span>
<span class="dt" style="left:587.60px;top:114.65px;width:300px;text-align:center;letter-spacing:0.4px;">22</span>
<span class="dt" style="left:699.95px;top:114.65px;width:300px;text-align:center;letter-spacing:0.4px;">Dry</span>
<span class="dt" style="left:750.95px;top:114.65px;width:300px;text-align:center;letter-spacing:0.3px;">12/2/2025</span>
<span class="dt" style="left:933.60px;top:114.65px;font-size:6.6px;">KUPERI LTD</span>
<span class="dt" style="left:-21.20px;top:114.60px;width:300px;text-align:center;color:#555;-webkit-text-stroke:0">2</span>
<div class="cb" style="left:144.20px;top:115.40px;width:7.5px;height:7.5px"></div>
<div class="a" style="left:140.00px;top:127.60px;width:875.00px;height:17.20px;background:#fde18a"></div>
<div class="a" style="left:140.00px;top:144.30px;width:875.00px;height:1.00px;background:#fde18a"></div>
<div class="a" style="left:118.00px;top:144.30px;width:22.00px;height:1.00px;background:#ececec"></div>
<div class="a" style="left:155.00px;top:127.60px;width:1.00px;height:17.20px;background:#f7da88"></div>
<div class="a" style="left:232.00px;top:127.60px;width:1.00px;height:17.20px;background:#f7da88"></div>
<div class="a" style="left:294.00px;top:127.60px;width:1.00px;height:17.20px;background:#f7da88"></div>
<div class="a" style="left:364.00px;top:127.60px;width:1.00px;height:17.20px;background:#f7da88"></div>
<div class="a" style="left:424.00px;top:127.60px;width:1.00px;height:17.20px;background:#f7da88"></div>
<div class="a" style="left:493.00px;top:127.60px;width:1.00px;height:17.20px;background:#f7da88"></div>
<div class="a" style="left:627.00px;top:127.60px;width:1.00px;height:17.20px;background:#f7da88"></div>
<div class="a" style="left:708.00px;top:127.60px;width:1.00px;height:17.20px;background:#f7da88"></div>
<div class="a" style="left:766.00px;top:127.60px;width:1.00px;height:17.20px;background:#f7da88"></div>
<div class="a" style="left:828.00px;top:127.60px;width:1.00px;height:17.20px;background:#f7da88"></div>
<div class="a" style="left:871.00px;top:127.60px;width:1.00px;height:17.20px;background:#f7da88"></div>
<div class="a" style="left:930.00px;top:127.60px;width:1.00px;height:17.20px;background:#f7da88"></div>
<div class="a" style="left:1017.00px;top:127.60px;width:1.00px;height:17.20px;background:#f7da88"></div>
<span class="dt" style="left:43.90px;top:131.80px;width:300px;text-align:center;">PO251202-0003</span>
<span class="dt" style="left:113.45px;top:131.80px;width:300px;text-align:center;">AL251202-0003</span>
<span class="dt" style="left:179.50px;top:131.80px;width:300px;text-align:center;">10031</span>
<span class="dt" style="left:244.30px;top:131.80px;width:300px;text-align:center;">001</span>
<span class="dt" style="left:309.00px;top:131.80px;width:300px;text-align:center;">1234567</span>
<span class="dt" style="left:497.00px;top:131.80px;">p1</span>
<span class="dt" style="left:518.10px;top:131.80px;width:300px;text-align:center;">GoodSet</span>
<span class="dt" style="left:587.60px;top:131.80px;width:300px;text-align:center;letter-spacing:0.4px;">36</span>
<span class="dt" style="left:699.95px;top:131.80px;width:300px;text-align:center;letter-spacing:0.4px;">Dry</span>
<span class="dt" style="left:750.95px;top:131.80px;width:300px;text-align:center;letter-spacing:0.3px;">12/2/2025</span>
<span class="dt" style="left:933.60px;top:131.80px;font-size:6.6px;">KUPERI LTD</span>
<span class="dt" style="left:-21.20px;top:131.80px;width:300px;text-align:center;color:#555;-webkit-text-stroke:0">3</span>
<svg class="a" style="left:143.80px;top:132.20px" width="8.5" height="8.5" viewBox="0 0 9 9"><rect x="0" y="0" width="9" height="9" rx="1.5" fill="#1f7ad8"/><path d="M2 4.6 L3.8 6.4 L7.2 2.4" fill="none" stroke="#fff" stroke-width="1.4"/></svg>
<div class="a" style="left:118.00px;top:158.10px;width:897.00px;height:1.00px;background:#e3e3e3"></div>
<div class="a" style="left:123.40px;top:150.30px;width:5.6px;height:2.8px;border:1px solid #7a7a7a;border-radius:1px;background:#ddd"></div>
<div class="cb" style="left:145.10px;top:148.20px;width:7px;height:7px"></div>
<span class="dt" style="left:156.00px;top:147.50px;font-weight:bold;font-size:7.1px;letter-spacing:0.6px;color:#333;-webkit-text-stroke:0">(1) AL251127-0001</span>
<div class="a" style="left:140.00px;top:158.60px;width:875.00px;height:17.10px;background:#f4f4f4"></div>
<div class="a" style="left:140.00px;top:175.20px;width:875.00px;height:1.00px;background:#e6e6e6"></div>
<div class="a" style="left:118.00px;top:175.20px;width:22.00px;height:1.00px;background:#ececec"></div>
<div class="a" style="left:155.00px;top:158.60px;width:1.00px;height:17.10px;background:#e4e4e4"></div>
<div class="a" style="left:232.00px;top:158.60px;width:1.00px;height:17.10px;background:#e4e4e4"></div>
<div class="a" style="left:294.00px;top:158.60px;width:1.00px;height:17.10px;background:#e4e4e4"></div>
<div class="a" style="left:364.00px;top:158.60px;width:1.00px;height:17.10px;background:#e4e4e4"></div>
<div class="a" style="left:424.00px;top:158.60px;width:1.00px;height:17.10px;background:#e4e4e4"></div>
<div class="a" style="left:493.00px;top:158.60px;width:1.00px;height:17.10px;background:#e4e4e4"></div>
<div class="a" style="left:627.00px;top:158.60px;width:1.00px;height:17.10px;background:#e4e4e4"></div>
<div class="a" style="left:708.00px;top:158.60px;width:1.00px;height:17.10px;background:#e4e4e4"></div>
<div class="a" style="left:766.00px;top:158.60px;width:1.00px;height:17.10px;background:#e4e4e4"></div>
<div class="a" style="left:828.00px;top:158.60px;width:1.00px;height:17.10px;background:#e4e4e4"></div>
<div class="a" style="left:871.00px;top:158.60px;width:1.00px;height:17.10px;background:#e4e4e4"></div>
<div class="a" style="left:930.00px;top:158.60px;width:1.00px;height:17.10px;background:#e4e4e4"></div>
<div class="a" style="left:1017.00px;top:158.60px;width:1.00px;height:17.10px;background:#e4e4e4"></div>
<span class="dt" style="left:43.90px;top:162.75px;width:300px;text-align:center;">PO251127-0001</span>
<span class="dt" style="left:113.45px;top:162.75px;width:300px;text-align:center;">AL251127-0001</span>
<span class="dt" style="left:179.50px;top:162.75px;width:300px;text-align:center;">1000</span>
<span class="dt" style="left:244.30px;top:162.75px;width:300px;text-align:center;">344</span>
<span class="dt" style="left:309.00px;top:162.75px;width:300px;text-align:center;">8887290101004</span>
<span class="dt" style="left:497.00px;top:162.75px;font-size:6.6px;">MACCOFFEE COFFEE 3X1 20G</span>
<span class="dt" style="left:518.10px;top:162.75px;width:300px;text-align:center;">GoodSet</span>
<span class="dt" style="left:587.60px;top:162.75px;width:300px;text-align:center;">120</span>
<span class="dt" style="left:699.95px;top:162.75px;width:300px;text-align:center;letter-spacing:0.4px;">Dry</span>
<span class="dt" style="left:750.95px;top:162.75px;width:300px;text-align:center;letter-spacing:0.3px;">11/27/2025</span>
<span class="dt" style="left:933.60px;top:162.75px;font-size:6.6px;">WORLD SERVICE LTD</span>
<span class="dt" style="left:-21.20px;top:162.80px;width:300px;text-align:center;color:#555;-webkit-text-stroke:0">4</span>
<div class="cb" style="left:144.20px;top:163.60px;width:7.5px;height:7.5px"></div>
<div class="a" style="left:118.00px;top:189.10px;width:897.00px;height:1.00px;background:#e3e3e3"></div>
<div class="a" style="left:123.40px;top:181.25px;width:5.6px;height:2.8px;border:1px solid #7a7a7a;border-radius:1px;background:#ddd"></div>
<div class="cb" style="left:145.10px;top:179.15px;width:7px;height:7px"></div>
<span class="dt" style="left:156.00px;top:178.45px;font-weight:bold;font-size:7.1px;letter-spacing:0.6px;color:#333;-webkit-text-stroke:0">(1) AL251009-0004</span></div></div>
<div class="a" style="left:118px;top:189.5px;width:22px;height:7.4px;overflow:hidden"><span class="dt" style="left:-139.20px;top:5.60px;width:300px;text-align:center;color:#555;-webkit-text-stroke:0">5</span></div>
<div class="a" style="left:1015.00px;top:86.00px;width:8.00px;height:111.00px;background:#fafafa"></div>
<svg class="a" style="left:1016.5px;top:87.5px" width="5" height="4" viewBox="0 0 5 4"><path d="M2.5 0.3 L4.8 3.7 L0.2 3.7 Z" fill="#555"/></svg>
<div class="a" style="left:1017.00px;top:106.00px;width:4.00px;height:62.50px;background:#8a8a8a;border-radius:2px"></div>
<svg class="a" style="left:1016.5px;top:183.5px" width="5" height="4" viewBox="0 0 5 4"><path d="M2.5 3.7 L4.8 0.3 L0.2 0.3 Z" fill="#555"/></svg>
<div class="a" style="left:140.50px;top:189.30px;width:874.50px;height:8.00px;background:#fafafa"></div>
<svg class="a" style="left:142.5px;top:191.2px" width="4" height="5" viewBox="0 0 4 5"><path d="M0.3 2.5 L3.7 0.2 L3.7 4.8 Z" fill="#555"/></svg>
<div class="a" style="left:150.50px;top:191.30px;width:563.00px;height:4.40px;background:#8a8a8a;border-radius:2.2px"></div>
<svg class="a" style="left:1008.5px;top:191.2px" width="4" height="5" viewBox="0 0 4 5"><path d="M3.7 2.5 L0.3 0.2 L0.3 4.8 Z" fill="#555"/></svg>
<div class="a" style="left:118.00px;top:196.90px;width:905.00px;height:1.00px;background:#d8d8d8"></div>
<div class="a" style="left:118.00px;top:197.60px;width:905.00px;height:19.00px;background:#e9e9e9"></div>
<div class="a" style="left:703.70px;top:197.90px;width:58.30px;height:18.30px;background:#fff"></div>
<span class="dt" style="left:583.00px;top:202.80px;width:300px;text-align:center;font-weight:bold;font-size:7.3px;color:#111;-webkit-text-stroke:0">218</span>
<div class="a" style="left:121.40px;top:218.30px;width:25.40px;height:12.30px;border:1px solid #ececec;background:#fff"></div>
<span class="dt" style="left:125.60px;top:220.00px;font-size:6.8px;color:#222">20</span>
<svg class="a" style="left:139.60px;top:222.40px" width="6" height="4" viewBox="0 0 6 4"><path d="M0.6 0.6 L3 3.2 L5.4 0.6" fill="none" stroke="#111" stroke-width="1.3"/></svg>
<div class="a" style="left:151.00px;top:218.20px;width:0.80px;height:12.80px;background:#e6e6e6"></div>
<div class="a" style="left:181.00px;top:218.20px;width:0.80px;height:12.80px;background:#e6e6e6"></div>
<div class="a" style="left:235.00px;top:218.20px;width:0.80px;height:12.80px;background:#e6e6e6"></div>
<div class="a" style="left:265.00px;top:218.20px;width:0.80px;height:12.80px;background:#e6e6e6"></div>
<div class="a" style="left:281.00px;top:218.20px;width:0.80px;height:12.80px;background:#e6e6e6"></div>
<svg class="a" style="left:156.5px;top:221.40px" width="6" height="6" viewBox="0 0 6 6"><path d="M0.6 0.3 L1.6 0.3 L1.6 5.7 L0.6 5.7 Z M5.6 0.3 L2.2 3 L5.6 5.7 Z" fill="#a0a0a0"/></svg>
<svg class="a" style="left:171px;top:221.40px" width="5" height="6" viewBox="0 0 5 6"><path d="M4.2 0.3 L0.8 3 L4.2 5.7 Z" fill="#a0a0a0"/></svg>
<span class="dt" style="left:185.80px;top:220.00px;font-size:6.6px;letter-spacing:0.1px;color:#555">Page</span>
<div class="a" style="left:202.00px;top:218.40px;width:15.60px;height:12.20px;border:1px solid #e8e8e8;background:#fff"></div>
<span class="dt" style="left:203.30px;top:220.00px;font-size:7.3px;color:#222">1</span>
<span class="dt" style="left:218.50px;top:220.00px;font-size:7px;letter-spacing:0.4px;color:#555">of 1</span>
<svg class="a" style="left:241.5px;top:221.40px" width="5" height="6" viewBox="0 0 5 6"><path d="M0.8 0.3 L4.2 3 L0.8 5.7 Z" fill="#a0a0a0"/></svg>
<svg class="a" style="left:254.5px;top:221.40px" width="6" height="6" viewBox="0 0 6 6"><path d="M4.4 0.3 L5.4 0.3 L5.4 5.7 L4.4 5.7 Z M0.4 0.3 L3.8 3 L0.4 5.7 Z" fill="#a0a0a0"/></svg>
<svg class="a" style="left:270.2px;top:221.20px" width="7" height="7.5" viewBox="0 0 7 7.5"><path d="M2.3 1.7 A2.7 2.7 0 1 0 4.7 1.7" fill="none" stroke="#444" stroke-width="1.05"/><path d="M2.2 0.2 L4.6 1.6 L2.4 3 Z" fill="#444"/></svg>
<svg class="a" style="left:287px;top:219.90px" width="7.4" height="9" viewBox="0 0 7.4 9"><path d="M0.6 0.6 L4.4 0.6 L6.8 3 L6.8 8.4 L0.6 8.4 Z" fill="#eef8fa" stroke="#8fc29a" stroke-width="1"/><path d="M4.2 0.6 L4.2 3.2 L6.8 3.2" fill="none" stroke="#8fc29a" stroke-width="0.8"/><path d="M2.4 3.8 L4.6 6.8 M4.6 3.8 L2.4 6.8" stroke="#2f7d43" stroke-width="0.9"/></svg>
<svg class="a" style="left:300.5px;top:220.90px" width="7" height="7" viewBox="0 0 7 7"><path d="M3.5 0.3 L3.5 6.7 M0.3 3.5 L6.7 3.5" stroke="#2e8b45" stroke-width="1.2"/></svg>
<span class="dt" style="left:310.00px;top:220.20px;font-size:6.95px;color:#222">Count</span>
<svg class="a" style="left:334.6px;top:221.40px" width="8" height="7" viewBox="0 0 8 7"><path d="M0.8 3.6 L2.8 6 L7.2 0.8" fill="none" stroke="#2e8b45" stroke-width="1.15"/></svg>
<span class="dt" style="left:345.00px;top:220.20px;font-size:7.05px;color:#222">Confirm</span>
<svg class="a" style="left:375.2px;top:221.20px" width="9" height="8" viewBox="0 0 9 8"><path d="M0.9 4.6 Q0.6 1.8 3.6 1.8 L6.4 1.8 M8.1 3.4 Q8.4 6.2 5.4 6.2 L2.6 6.2" fill="none" stroke="#7a7f88" stroke-width="1"/><path d="M5.8 0.2 L8.2 1.8 L5.8 3.2 Z M3.2 4.8 L0.8 6.2 L3.2 7.8 Z" fill="#7a7f88"/></svg>
<span class="dt" style="left:386.20px;top:220.20px;font-size:6.75px;letter-spacing:0.1px;color:#222">ReCount</span>
<span class="dt" style="left:569.30px;top:219.80px;width:300px;text-align:right;font-size:7.25px;color:#555">Groups: 0</span>
<div class="a" style="left:873.80px;top:218.00px;width:0.80px;height:13.60px;background:#e8e8e8"></div>
<span class="dt" style="left:620.00px;top:219.80px;width:300px;text-align:right;font-size:7.2px;color:#3a95e8">Selected: 1</span>
<div class="a" style="left:925.20px;top:218.00px;width:0.80px;height:13.60px;background:#e8e8e8"></div>
<span class="dt" style="left:719.70px;top:219.80px;width:300px;text-align:right;font-size:7.4px;color:#444">Displaying 1 to 5 of 5 items</span>
<div class="a" style="left:118.00px;top:232.40px;width:905.00px;height:1.30px;background:#e6e6e6"></div>
<div class="a" style="left:138.10px;top:127.30px;width:19.20px;height:19.20px;border:2px solid #ff0000"></div>
<div class="a" style="left:331.00px;top:214.00px;width:43.00px;height:19.60px;border:2px solid #ff0000"></div>
<div class="a" style="left:117.00px;top:235.50px;width:907.00px;height:318.50px;border:1px solid #e2e2e2;border-top-color:#fff;border-radius:2px;background:#fff"></div>
<span class="t" style="left:121.00px;top:237.90px;font-size:7.65px;color:#2b2b2b">Receiving Count</span>
<svg class="a" style="left:994.6px;top:237.6px" width="10" height="9" viewBox="0 0 10 9"><rect x="1.1" y="0.9" width="7.8" height="5.6" rx="1" fill="#fff" stroke="#555" stroke-width="1.3"/><path d="M3 8.3 L7 8.3" stroke="#555" stroke-width="1"/><path d="M4.2 6.6 L5.8 6.6 L5.8 8 L4.2 8 Z" fill="#555"/></svg>
<svg class="a" style="left:1008.5px;top:238.5px" width="9" height="8" viewBox="0 0 10 9"><path d="M0.5 0.6 L9.5 0.6 L6 4.4 L6 8.6 L4 7.4 L4 4.4 Z" fill="#4a4a4a"/></svg>
<div class="a" style="left:118.00px;top:249.20px;width:905.00px;height:0.80px;background:#e6e6e6"></div>
<div class="a" style="left:148.00px;top:250.00px;width:1.00px;height:32.50px;background:#efefef"></div>
<div class="a" style="left:163.00px;top:250.00px;width:1.00px;height:32.50px;background:#efefef"></div>
<div class="a" style="left:236.00px;top:250.00px;width:1.00px;height:32.50px;background:#efefef"></div>
<div class="a" style="left:287.00px;top:250.00px;width:1.00px;height:32.50px;background:#efefef"></div>
<div class="a" style="left:349.00px;top:250.00px;width:1.00px;height:32.50px;background:#efefef"></div>
<div class="a" style="left:396.00px;top:250.00px;width:1.00px;height:32.50px;background:#efefef"></div>
<div class="a" style="left:467.00px;top:250.00px;width:1.00px;height:32.50px;background:#efefef"></div>
<div class="a" style="left:570.00px;top:250.00px;width:1.00px;height:32.50px;background:#efefef"></div>
<div class="a" style="left:118.00px;top:266.20px;width:453.00px;height:0.80px;background:#ececec"></div>
<div class="a" style="left:118.00px;top:282.30px;width:905.00px;height:0.90px;background:#e8e8e8"></div>
<div class="cb" style="left:152.00px;top:254.40px;width:7.5px;height:7.5px"></div>
<span class="ht" style="left:176.00px;top:253.20px;color:#2e3a4e">Counted Qty</span>
<svg class="a" style="left:218.30px;top:254.00px" width="5" height="8" viewBox="0 0 5 8"><path d="M2.5 0.9 L4.1 3.4 L0.9 3.4 Z M2.5 7.1 L4.1 4.6 L0.9 4.6 Z" fill="#c8c8c8" stroke="#c8c8c8" stroke-width="0.6" stroke-linejoin="round"/></svg>
<span class="ht" style="left:251.80px;top:253.20px;font-size:6.7px;letter-spacing:-0.25px;color:#2e3a4e">PCB</span>
<svg class="a" style="left:266.40px;top:254.00px" width="5" height="8" viewBox="0 0 5 8"><path d="M2.5 0.9 L4.1 3.4 L0.9 3.4 Z M2.5 7.1 L4.1 4.6 L0.9 4.6 Z" fill="#c8c8c8" stroke="#c8c8c8" stroke-width="0.6" stroke-linejoin="round"/></svg>
<span class="ht" style="left:308.00px;top:253.20px;font-size:6.75px;letter-spacing:-0.2px;color:#2e3a4e">Pack</span>
<svg class="a" style="left:323.80px;top:254.00px" width="5" height="8" viewBox="0 0 5 8"><path d="M2.5 0.9 L4.1 3.4 L0.9 3.4 Z M2.5 7.1 L4.1 4.6 L0.9 4.6 Z" fill="#c8c8c8" stroke="#c8c8c8" stroke-width="0.6" stroke-linejoin="round"/></svg>
<span class="ht" style="left:361.60px;top:253.20px;font-size:6.85px;letter-spacing:-0.1px;color:#2e3a4e">Piece</span>
<svg class="a" style="left:379.70px;top:254.00px" width="5" height="8" viewBox="0 0 5 8"><path d="M2.5 0.9 L4.1 3.4 L0.9 3.4 Z M2.5 7.1 L4.1 4.6 L0.9 4.6 Z" fill="#c8c8c8" stroke="#c8c8c8" stroke-width="0.6" stroke-linejoin="round"/></svg>
<span class="ht" style="left:413.10px;top:253.20px;color:#7d8593">Batch No.</span>
<svg class="a" style="left:445.80px;top:254.00px" width="5" height="8" viewBox="0 0 5 8"><path d="M2.5 0.9 L4.1 3.4 L0.9 3.4 Z M2.5 7.1 L4.1 4.6 L0.9 4.6 Z" fill="#c8c8c8" stroke="#c8c8c8" stroke-width="0.6" stroke-linejoin="round"/></svg>
<span class="ht" style="left:501.20px;top:253.20px;color:#2e3a4e">Exp Date</span>
<svg class="a" style="left:531.50px;top:254.00px" width="5" height="8" viewBox="0 0 5 8"><path d="M2.5 0.9 L4.1 3.4 L0.9 3.4 Z M2.5 7.1 L4.1 4.6 L0.9 4.6 Z" fill="#c8c8c8" stroke="#c8c8c8" stroke-width="0.6" stroke-linejoin="round"/></svg>
<svg class="a" style="left:166.20px;top:270.80px" width="7.5" height="7.5" viewBox="0 0 8 8"><path d="M0.6 0.8 L7.4 0.8 L4.6 4 L4.6 7.2 L3.4 6.2 L3.4 4 Z" fill="none" stroke="#555" stroke-width="0.9" stroke-linejoin="round"/></svg>
<svg class="a" style="left:238.90px;top:270.80px" width="7.5" height="7.5" viewBox="0 0 8 8"><path d="M0.6 0.8 L7.4 0.8 L4.6 4 L4.6 7.2 L3.4 6.2 L3.4 4 Z" fill="none" stroke="#555" stroke-width="0.9" stroke-linejoin="round"/></svg>
<svg class="a" style="left:290.40px;top:270.80px" width="7.5" height="7.5" viewBox="0 0 8 8"><path d="M0.6 0.8 L7.4 0.8 L4.6 4 L4.6 7.2 L3.4 6.2 L3.4 4 Z" fill="none" stroke="#555" stroke-width="0.9" stroke-linejoin="round"/></svg>
<svg class="a" style="left:352.90px;top:270.80px" width="7.5" height="7.5" viewBox="0 0 8 8"><path d="M0.6 0.8 L7.4 0.8 L4.6 4 L4.6 7.2 L3.4 6.2 L3.4 4 Z" fill="none" stroke="#555" stroke-width="0.9" stroke-linejoin="round"/></svg>
<svg class="a" style="left:399.80px;top:269.50px" width="7.5" height="7.5" viewBox="0 0 8 8"><path d="M0.6 0.8 L7.4 0.8 L4.6 4 L4.6 7.2 L3.4 6.2 L3.4 4 Z" fill="none" stroke="#555" stroke-width="0.9" stroke-linejoin="round"/></svg>
<svg class="a" style="left:470.80px;top:270.80px" width="7.5" height="7.5" viewBox="0 0 8 8"><path d="M0.6 0.8 L7.4 0.8 L4.6 4 L4.6 7.2 L3.4 6.2 L3.4 4 Z" fill="none" stroke="#555" stroke-width="0.9" stroke-linejoin="round"/></svg>
<svg class="a" style="left:277.20px;top:270.30px" width="7" height="7" viewBox="0 0 7 7"><circle cx="3.5" cy="3.6" r="2.6" fill="none" stroke="#f25050" stroke-width="0.95"/><path d="M0.9 6.6 L6.1 0.5" stroke="#f25050" stroke-width="0.95"/></svg>
<svg class="a" style="left:339.30px;top:270.30px" width="7" height="7" viewBox="0 0 7 7"><circle cx="3.5" cy="3.6" r="2.6" fill="none" stroke="#f25050" stroke-width="0.95"/><path d="M0.9 6.6 L6.1 0.5" stroke="#f25050" stroke-width="0.95"/></svg>
<svg class="a" style="left:386.60px;top:270.30px" width="7" height="7" viewBox="0 0 7 7"><circle cx="3.5" cy="3.6" r="2.6" fill="none" stroke="#f25050" stroke-width="0.95"/><path d="M0.9 6.6 L6.1 0.5" stroke="#f25050" stroke-width="0.95"/></svg>
<svg class="a" style="left:457.60px;top:269.10px" width="7" height="7" viewBox="0 0 7 7"><circle cx="3.5" cy="3.6" r="2.6" fill="none" stroke="#f25050" stroke-width="0.95"/><path d="M0.9 6.6 L6.1 0.5" stroke="#f25050" stroke-width="0.95"/></svg>
<div class="a" style="left:118.00px;top:534.60px;width:905.00px;height:1.60px;background:#d6d6d6"></div>
<div class="a" style="left:121.40px;top:539.10px;width:25.40px;height:12.30px;border:1px solid #ececec;background:#fff"></div>
<span class="dt" style="left:125.60px;top:540.80px;font-size:6.8px;color:#222">20</span>
<svg class="a" style="left:139.60px;top:543.20px" width="6" height="4" viewBox="0 0 6 4"><path d="M0.6 0.6 L3 3.2 L5.4 0.6" fill="none" stroke="#111" stroke-width="1.3"/></svg>
<div class="a" style="left:151.00px;top:539.00px;width:0.80px;height:12.80px;background:#e6e6e6"></div>
<div class="a" style="left:181.00px;top:539.00px;width:0.80px;height:12.80px;background:#e6e6e6"></div>
<div class="a" style="left:235.00px;top:539.00px;width:0.80px;height:12.80px;background:#e6e6e6"></div>
<div class="a" style="left:265.00px;top:539.00px;width:0.80px;height:12.80px;background:#e6e6e6"></div>
<div class="a" style="left:281.00px;top:539.00px;width:0.80px;height:12.80px;background:#e6e6e6"></div>
<svg class="a" style="left:156.5px;top:542.20px" width="6" height="6" viewBox="0 0 6 6"><path d="M0.6 0.3 L1.6 0.3 L1.6 5.7 L0.6 5.7 Z M5.6 0.3 L2.2 3 L5.6 5.7 Z" fill="#a0a0a0"/></svg>
<svg class="a" style="left:171px;top:542.20px" width="5" height="6" viewBox="0 0 5 6"><path d="M4.2 0.3 L0.8 3 L4.2 5.7 Z" fill="#a0a0a0"/></svg>
<span class="dt" style="left:185.80px;top:540.80px;font-size:6.6px;letter-spacing:0.1px;color:#555">Page</span>
<div class="a" style="left:202.00px;top:539.20px;width:15.60px;height:12.20px;border:1px solid #e8e8e8;background:#fff"></div>
<span class="dt" style="left:203.30px;top:540.80px;font-size:7.3px;color:#222">0</span>
<span class="dt" style="left:218.50px;top:540.80px;font-size:7px;letter-spacing:0.4px;color:#555">of 0</span>
<svg class="a" style="left:241.5px;top:542.20px" width="5" height="6" viewBox="0 0 5 6"><path d="M0.8 0.3 L4.2 3 L0.8 5.7 Z" fill="#a0a0a0"/></svg>
<svg class="a" style="left:254.5px;top:542.20px" width="6" height="6" viewBox="0 0 6 6"><path d="M4.4 0.3 L5.4 0.3 L5.4 5.7 L4.4 5.7 Z M0.4 0.3 L3.8 3 L0.4 5.7 Z" fill="#a0a0a0"/></svg>
<svg class="a" style="left:270.2px;top:542.00px" width="7" height="7.5" viewBox="0 0 7 7.5"><path d="M2.3 1.7 A2.7 2.7 0 1 0 4.7 1.7" fill="none" stroke="#444" stroke-width="1.05"/><path d="M2.2 0.2 L4.6 1.6 L2.4 3 Z" fill="#444"/></svg>
<svg class="a" style="left:287px;top:540.70px" width="7.4" height="9" viewBox="0 0 7.4 9"><path d="M0.6 0.6 L4.4 0.6 L6.8 3 L6.8 8.4 L0.6 8.4 Z" fill="#eef8fa" stroke="#8fc29a" stroke-width="1"/><path d="M4.2 0.6 L4.2 3.2 L6.8 3.2" fill="none" stroke="#8fc29a" stroke-width="0.8"/><path d="M2.4 3.8 L4.6 6.8 M4.6 3.8 L2.4 6.8" stroke="#2f7d43" stroke-width="0.9"/></svg>
<span class="dt" style="left:620.40px;top:539.70px;width:300px;text-align:right;font-size:7.2px;color:#3a95e8">Selected: 0</span>
<div class="a" style="left:925.20px;top:538.00px;width:0.80px;height:13.60px;background:#e8e8e8"></div>
<span class="dt" style="left:719.50px;top:539.70px;width:300px;text-align:right;font-size:7.4px;color:#444">Displaying 0 to 0 of 0 items</span>
<svg class="a" style="left:119.6px;top:557px" width="17" height="17" viewBox="0 0 17 17"><defs><clipPath id="cc"><circle cx="8.3" cy="8.2" r="8"/></clipPath></defs><circle cx="8.3" cy="8.2" r="8" fill="#fbbd0a"/><g clip-path="url(#cc)"><path d="M2.6 17 L3 13.2 Q3.6 11.4 6 10.8 L10.6 10.8 Q13 11.4 13.6 13.2 L14 17 Z" fill="#5a6168"/><path d="M6.6 10.6 L10 10.6 L9.8 13 L8.3 14 L6.8 13 Z" fill="#fbe0b4"/><ellipse cx="8.3" cy="7.4" rx="2.8" ry="3.7" fill="#fde3ba"/><path d="M5.3 7 Q4.6 2.2 8.3 2.1 Q12 2.2 11.3 7 Q11 4.9 9.6 4.5 Q8.3 4.2 7 4.5 Q5.6 4.9 5.3 7 Z" fill="#8b5a3a"/></g></svg>
<span class="t" style="left:149.80px;top:560.90px;font-size:7.2px;color:#333">dry user</span>
<svg class="a" style="left:179.6px;top:563.6px" width="6" height="4" viewBox="0 0 6 4"><path d="M0.3 0.3 L5.7 0.3 L3 3.4 Z" fill="#222"/></svg>
<span class="t" style="left:192.60px;top:560.40px;font-size:5.7px;letter-spacing:0.21px;color:#333;-webkit-text-stroke:0">all intellectual property rights for LINARI are reserved. designed and developed by LINARI software development team.</span>
<span class="t" style="left:642.90px;top:560.60px;width:300px;text-align:right;font-size:7.7px;font-weight:bold;color:#279a6c;-webkit-text-stroke:0.1px currentColor">Warehouse: Dry - Year: 2025</span>
<div class="a" style="left:948.50px;top:559.50px;width:0.80px;height:12.00px;background:#d8d8d8"></div>
<span class="t" style="left:951.60px;top:560.60px;font-size:7.75px;color:#333">12/12/2025 3:30:05</span>
<div class="a" style="left:1018.60px;top:560.00px;width:0.70px;height:10.50px;background:#b5b5b5"></div>
<svg class="a" style="left:370px;top:230px" width="62" height="16" viewBox="0 0 62 16"><path d="M57.5 13.4 L11 6.4" stroke="#ff1a1a" stroke-width="1.15"/><path d="M4.4 5.2 L14.8 3.9 L13.4 9.7 Z" fill="#ff1a1a"/></svg>
</body></html>
